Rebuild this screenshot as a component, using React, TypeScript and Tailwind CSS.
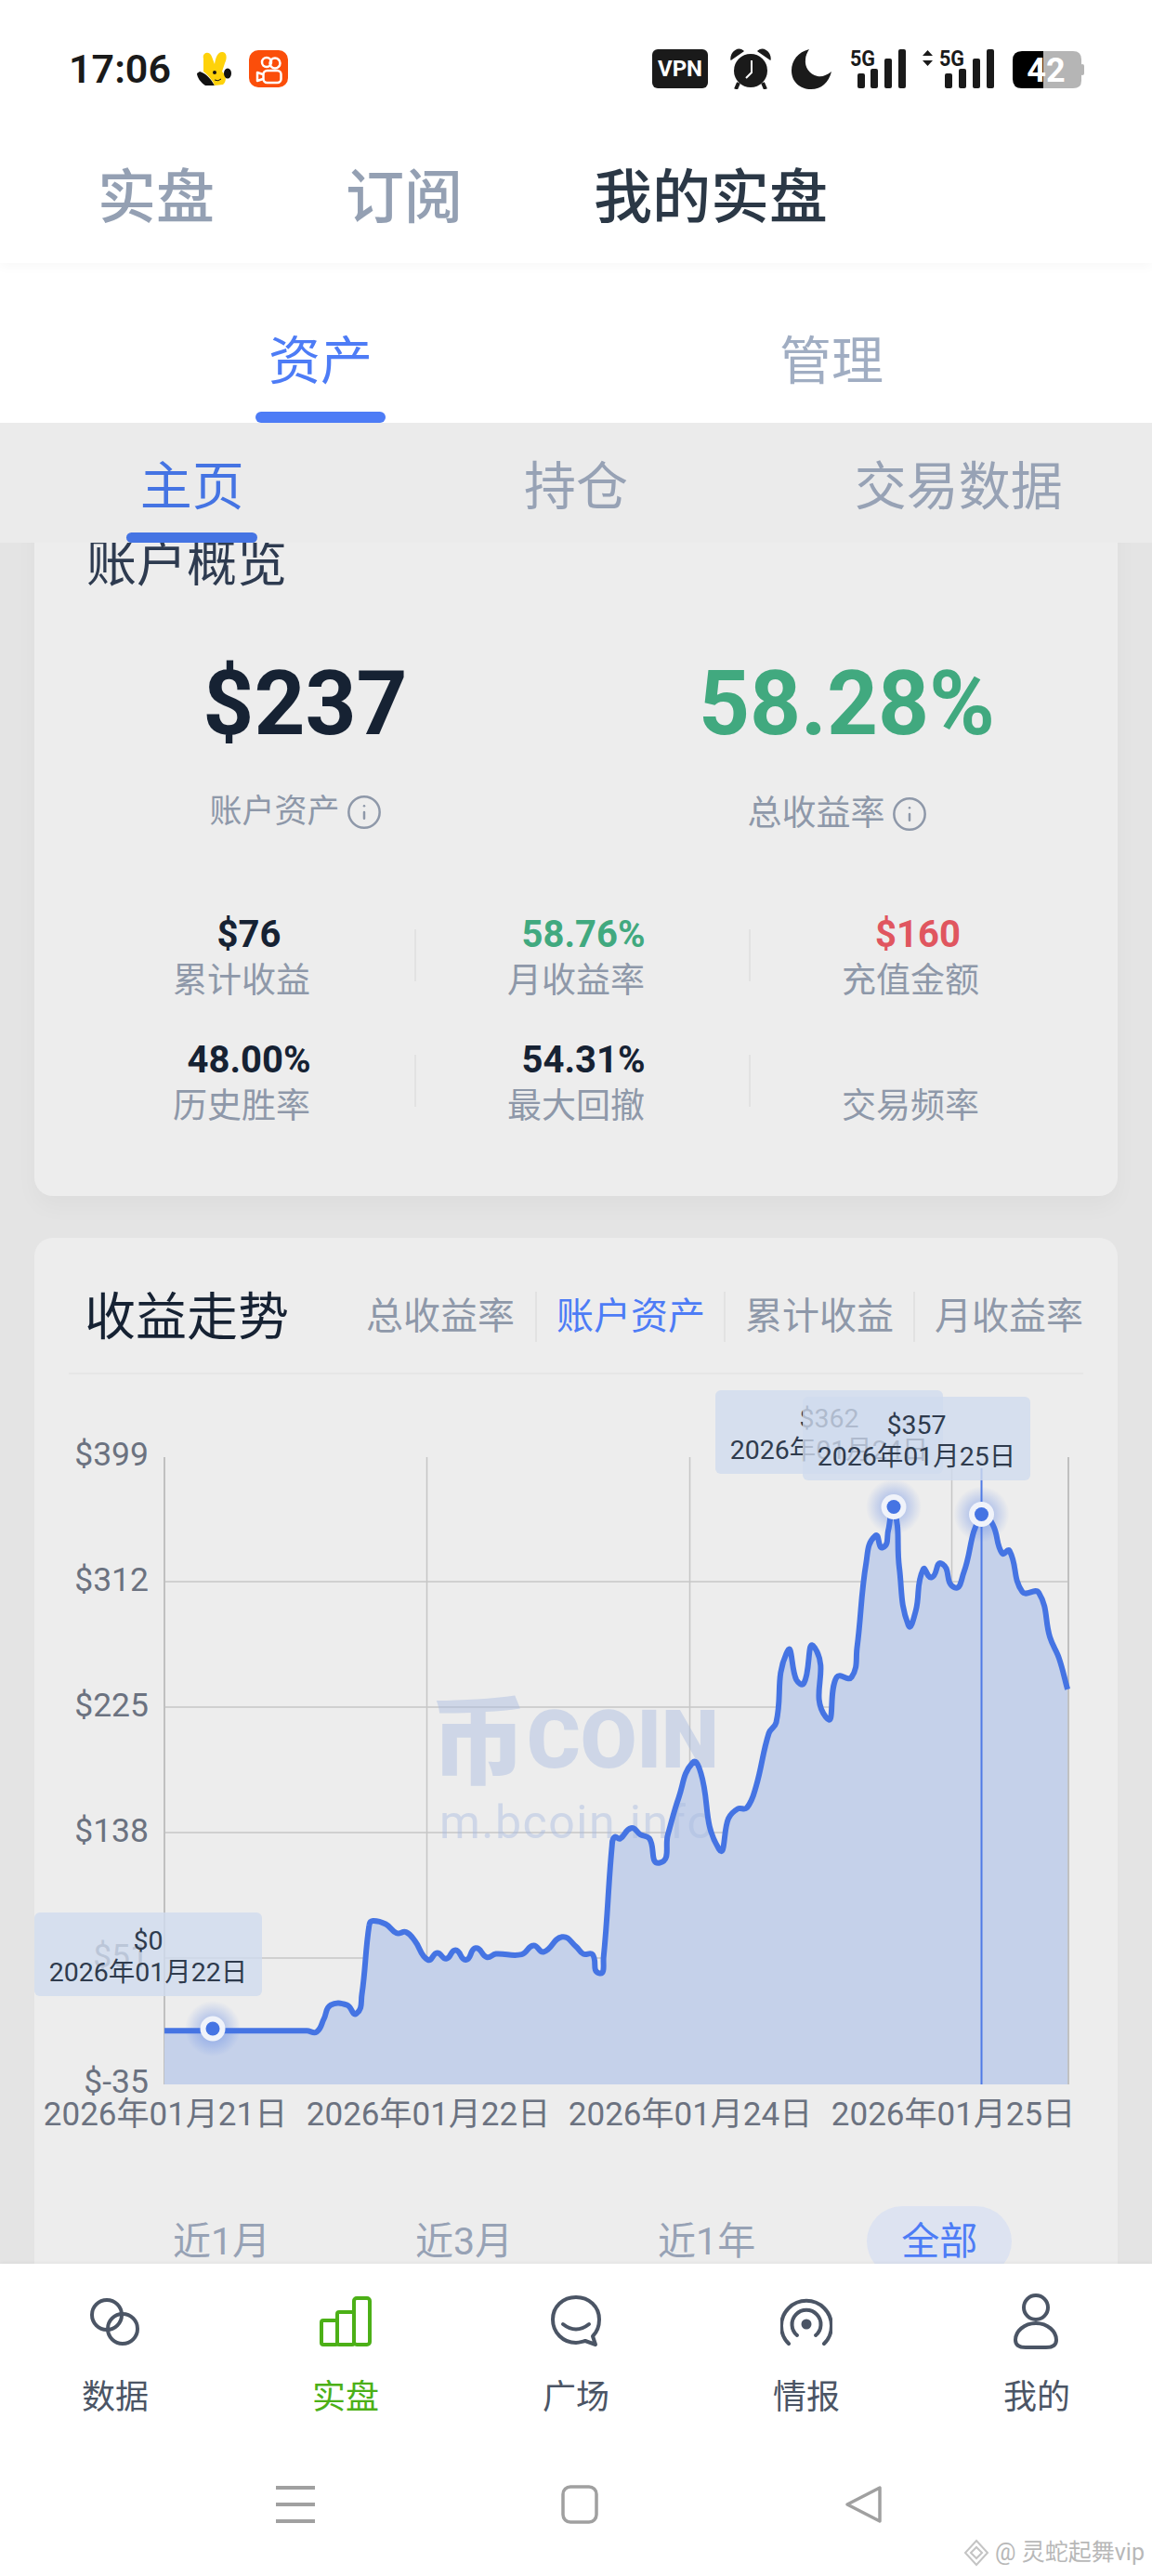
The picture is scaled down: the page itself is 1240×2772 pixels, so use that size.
import React from "react";
import { Info } from "lucide-react";

const left: [number, number][] = [[448,1368],[835,1368],[862,1370],[882,1345],[900,1320],[945,1320],[970,1336],[985,1300],[1005,1170],[1015,1162],[1050,1168],[1080,1185],[1105,1183],[1130,1200],[1165,1235],[1190,1222],[1215,1233],[1240,1217],[1268,1235],[1295,1213],[1325,1230],[1350,1224],[1420,1225],[1452,1208],[1480,1220],[1530,1192]];
const right: [number, number][] = [[0,1210],[20,1224],[45,1225],[63,1260],[75,1230],[98,1020],[105,1005],[120,1008],[150,988],[175,1000],[200,1008],[228,1053],[250,1000],[280,930],[318,865],[340,885],[389,1027],[415,970],[440,952],[465,950],[490,910],[525,810],[545,790],[575,657],[600,710],[620,717],[650,650],[680,780],[710,705],[750,705],[765,650],[790,490],[815,440],[835,462],[850,430],[865,386],[880,500],[905,608],[925,580],[945,503],[968,518],[995,492],[1030,537],[1055,510],[1104,400],[1135,420],[1160,473],[1180,468],[1215,545],[1260,547],[1290,630],[1315,670],[1338,728]];
const pts: [number, number][] = [
  ...left.map(([x, y]) => [x / 2.529, 1400 + y / 1.742] as [number, number]),
  ...right.map(([x, y]) => [620 + x / 2.529, 1400 + y / 1.742] as [number, number]),
];
function smooth(p: [number, number][]) {
  let d = `M${p[0][0].toFixed(1)} ${p[0][1].toFixed(1)}`;
  for (let i = 0; i < p.length - 1; i++) {
    const a = p[Math.max(0, i - 1)], b = p[i], c = p[i + 1], e = p[Math.min(p.length - 1, i + 2)];
    const ab = Math.hypot(c[0] - b[0], c[1] - b[1]);
    const s1 = ab / (Math.hypot(c[0] - a[0], c[1] - a[1]) || 1) * 0.4;
    const s2 = ab / (Math.hypot(e[0] - b[0], e[1] - b[1]) || 1) * 0.4;
    d += ` C${(b[0] + (c[0] - a[0]) * s1).toFixed(1)} ${(b[1] + (c[1] - a[1]) * s1).toFixed(1)} ${(c[0] - (e[0] - b[0]) * s2).toFixed(1)} ${(c[1] - (e[1] - b[1]) * s2).toFixed(1)} ${c[0].toFixed(1)} ${c[1].toFixed(1)}`;
  }
  return d;
}
const linePath = smooth(pts);
const areaPath = `${linePath} L${pts[pts.length - 1][0].toFixed(1)} 2243 L177 2243 Z`;

function StatusBar() {
  return (
    <div className="flex h-[44px] items-center mt-[52px] mb-[50px] pl-[74px] pr-[73px] text-[#1a1a1a]">
      <span className="text-[43px] leading-[44px] font-semibold w-[109px]">17:06</span>
      <svg width="40" height="38" viewBox="0 0 38 38" className="ml-[27px]">
        <path d="M4 22 C11 24 16 30 20 37 L10 37 C5 34 1 28 1 24 Z" fill="#111" />
        <path d="M8 8 C6 1 15 -1 17 6 L20 14 C21 6 24 0 29 1 C34 2 33 9 31 13 L28 22 C33 26 33 33 29 36 L20 37 C18 31 12 25 8 22 Z" fill="#fed20a" />
        <ellipse cx="34" cy="24" rx="4" ry="5.5" fill="#111" />
        <circle cx="20" cy="23" r="2" fill="#111" />
        <path d="M20 31 Q24 33 27 30" stroke="#111" strokeWidth="1" fill="none" />
      </svg>
      <svg width="42" height="40" viewBox="0 0 42 40" className="ml-[18px]">
        <rect width="42" height="40" rx="10" fill="#fb4e0a" />
        <circle cx="19" cy="13" r="5" fill="none" stroke="#fff" strokeWidth="2.5" />
        <circle cx="28" cy="14" r="5.5" fill="none" stroke="#fff" strokeWidth="2.5" />
        <rect x="15.5" y="22" width="19" height="13" rx="4" fill="none" stroke="#fff" strokeWidth="2.5" />
        <path d="M15 26 L9 24 V33 L15 31" fill="none" stroke="#fff" strokeWidth="2.5" strokeLinejoin="round" />
      </svg>
      <div className="ml-auto flex items-center">
        <div className="flex h-[42px] w-[60px] items-center justify-center rounded-md bg-[#1a1a1a] text-[24px] font-bold leading-none text-white">VPN</div>
        <svg width="44" height="44" viewBox="0 0 44 44" className="ml-[24px]">
          <path d="M1 12 C1 3 9 -1 14 3 Z M43 12 C43 3 35 -1 30 3 Z" fill="#1a1a1a" stroke="#1a1a1a" strokeWidth="1.5" strokeLinejoin="round" />
          <circle cx="22" cy="24" r="18" fill="#1a1a1a" />
          <path d="M9 37 L6 44 M35 37 L38 44" stroke="#1a1a1a" strokeWidth="4" />
          <path d="M23 13 V26 L17 32" stroke="#fff" strokeWidth="2" fill="none" />
        </svg>
        <svg width="43" height="43" viewBox="0 0 43 43" className="ml-[22px]">
          <path d="M19 0 C7 3 0 12 0 23 C0 35 9 43 21 43 C32 43 40 36 43 24 C38 28 33 30 28 29 C19 27 14 19 15 11 C15 7 17 3 19 0Z" fill="#1a1a1a" />
        </svg>
        <svg width="60" height="44" viewBox="0 0 60 44" className="ml-[20px]">
          <text x="0" y="19" fontSize="23" fontWeight="700" fill="#1a1a1a" textLength="27" lengthAdjust="spacingAndGlyphs">5G</text>
          <rect x="8" y="27" width="8" height="16" rx="2" fill="#1a1a1a" />
          <rect x="22" y="22" width="8" height="21" rx="2" fill="#1a1a1a" />
          <rect x="37" y="11" width="8" height="32" rx="2" fill="#1a1a1a" />
          <rect x="52" y="1" width="8" height="42" rx="2" fill="#1a1a1a" />
        </svg>
        <svg width="77" height="44" viewBox="0 0 77 44" className="ml-[18px]">
          <path d="M5.5 2 L11 8 H0 Z M5.5 19 L11 13 H0 Z" fill="#1a1a1a" />
          <text x="18" y="19" fontSize="23" fontWeight="700" fill="#1a1a1a" textLength="27" lengthAdjust="spacingAndGlyphs">5G</text>
          <rect x="24" y="27" width="8" height="16" rx="2" fill="#1a1a1a" />
          <rect x="39" y="22" width="8" height="21" rx="2" fill="#1a1a1a" />
          <rect x="54" y="11" width="8" height="32" rx="2" fill="#1a1a1a" />
          <rect x="69" y="1" width="8" height="42" rx="2" fill="#1a1a1a" />
        </svg>
        <svg width="77" height="44" viewBox="0 0 77 44" className="ml-[20px]">
          <path d="M33 3 H65 Q74 3 74 12 V35 Q74 43 65 43 H33 Z" fill="#b5b5b5" />
          <rect x="73" y="17" width="4" height="12" rx="2" fill="#b5b5b5" />
          <path d="M33 3 H10 Q0 3 0 13 V33 Q0 43 10 43 H33 Z" fill="#000" />
          <text x="36" y="36" textAnchor="middle" fontSize="36" fontWeight="700" fill="#fff">42</text>
        </svg>
      </div>
    </div>
  );
}

function Stat({ value, label, color, divider }: { value: string; label: string; color: string; divider?: boolean }) {
  return (
    <div className="relative flex flex-col items-center">
      <span className={`h-[40px] text-[40px] leading-[40px] font-bold ${color}`}>{value}</span>
      <span className="mt-[8px] pr-4 text-[37px] leading-[44px] text-[#8e98a9]">{label}</span>
      {divider && <div className="absolute right-0 top-[14px] h-[56px] w-[2px] bg-[#e2e2e2]" />}
    </div>
  );
}

function NavItem({ label, active, children }: { label: string; active?: boolean; children: React.ReactNode }) {
  return (
    <div className="flex flex-col items-center">
      <svg width="56" height="60" viewBox="0 0 56 60" fill="none" stroke={active ? "#4cb017" : "#4b5565"} strokeWidth="4" strokeLinecap="round" strokeLinejoin="round">
        {children}
      </svg>
      <span className={`mt-[32px] text-[36px] leading-[40px] ${active ? "text-[#4cb017]" : "text-[#4b5565]"}`}>{label}</span>
    </div>
  );
}

function Tip({ value, date, className }: { value: string; date: string; className: string }) {
  return (
    <div className={`absolute flex h-[90px] w-[245px] flex-col items-center justify-center rounded-md bg-[rgba(207,219,238,0.8)] pt-[5px] text-[#2f3b4d] text-[28.5px] leading-[34px] ${className}`}>
      <span>{value}</span>
      <span>{date}</span>
    </div>
  );
}

function Dot({ x, y, id }: { x: number; y: number; id: string }) {
  return (
    <g>
      <circle cx={x} cy={y} r="30" fill={`url(#${id})`} />
      <circle cx={x} cy={y} r="13.5" fill="#f0f3fa" />
      <circle cx={x} cy={y} r="7.5" fill="#4574e3" />
    </g>
  );
}

function Chart() {
  const gridY = [1702, 1837, 1972, 2107];
  const gridX = [459.5, 742.5, 1024.5];
  const yLabels: [string, number][] = [["$399", 1577], ["$312", 1712], ["$225", 1847], ["$138", 1982], ["$51", 2117], ["$-35", 2252]];
  const xLabels: [string, number][] = [["2026年01月21日", 178], ["2026年01月22日", 461], ["2026年01月24日", 743], ["2026年01月25日", 1026]];
  return (
    <div className="relative h-[895px]">
      <svg width="1166" height="895" viewBox="37 1479 1166 895" className="block">
        <defs>
          <radialGradient id="glow">
            <stop offset="40%" stopColor="#4574e3" stopOpacity="0.32" />
            <stop offset="100%" stopColor="#4574e3" stopOpacity="0" />
          </radialGradient>
        </defs>
        {gridY.map((y) => <line key={y} x1="177" x2="1150" y1={y} y2={y} stroke="#c6c6c6" strokeWidth="1.5" />)}
        {gridX.map((x) => <line key={x} x1={x} x2={x} y1="1568" y2="2243" stroke="#c6c6c6" strokeWidth="1.5" />)}
        <line x1="177" x2="177" y1="1568" y2="2243" stroke="#c0c0c0" strokeWidth="2" />
        <line x1="1150" x2="1150" y1="1568" y2="2243" stroke="#c0c0c0" strokeWidth="2" />
        {yLabels.map(([t, y]) => <text key={t} x="160" y={y} textAnchor="end" fontSize="35.5" fill="#6b7280">{t}</text>)}
        {xLabels.map(([t, x]) => <text key={t} x={x} y="2287" textAnchor="middle" fontSize="35" fill="#6b7280">{t}</text>)}
        <path d={areaPath} fill="#c5d1ea" />
        <g fill="#a9bce0" opacity="0.45">
          <text x="463" y="1912" fontSize="104" fontWeight="900" fontFamily="'Noto Sans CJK SC'">币</text>
          <text x="567" y="1902" fontSize="88" fontWeight="900" fontFamily="Roboto">COIN</text>
          <text x="473" y="1978" fontSize="50" letterSpacing="1.5">m.bcoin.info</text>
        </g>
        <line x1="1056.5" x2="1056.5" y1="1580" y2="2243" stroke="#4f7ae6" strokeWidth="2" />
        <path d={linePath} fill="none" stroke="#4574e3" strokeWidth="6" strokeLinejoin="round" />
        <Dot x={229} y={2183} id="glow" />
        <Dot x={962} y={1621.5} id="glow" />
        <Dot x={1056.5} y={1629.5} id="glow" />
      </svg>
      <Tip value="$0" date="2026年01月22日" className="left-0 top-[579px]" />
      <Tip value="$362" date="2026年01月24日" className="left-[733px] top-[17px]" />
      <Tip value="$357" date="2026年01月25日" className="left-[827px] top-[24px]" />
    </div>
  );
}

export default function App() {
  return (
    <div className="flex h-[2772px] w-[1240px] flex-col overflow-hidden bg-white font-['Roboto','Noto_Sans_CJK_SC',sans-serif]">
      <div className="relative z-20 bg-white shadow-[0_4px_12px_rgba(0,0,0,0.03)]">
        <StatusBar />
        <div className="flex h-[137px] items-center gap-[141px] pb-[3px] pl-[105px] text-[63px] font-medium leading-[64px] text-[#94a0b3]">
          <span>实盘</span>
          <span>订阅</span>
          <span className="text-[#2b3846]">我的实盘</span>
        </div>
      </div>
      <div className="relative z-10 grid h-[172px] grid-cols-2 bg-white px-[70px] text-[56px] leading-[56px] text-[#a0adc2]">
        <div className="flex flex-col items-center pt-[78px]">
          <span className="text-[#4d7cf6]">资产</span>
          <div className="mt-[26px] h-[12px] w-[140px] rounded-md bg-[#4d7cf6]" />
        </div>
        <div className="flex flex-col items-center pt-[78px]"><span>管理</span></div>
      </div>
      <div className="relative z-10 grid h-[129px] grid-cols-3 bg-[#ebebeb] text-[56px] leading-[56px] text-[#97a2b5]">
        <div className="flex flex-col items-center pt-[41px]">
          <span className="text-[#4574e3]">主页</span>
          <div className="mt-[21px] h-[11px] w-[141px] rounded-md bg-[#4574e3]" />
        </div>
        <div className="flex flex-col items-center pt-[41px]"><span>持仓</span></div>
        <div className="flex flex-col items-center pt-[41px] pr-[3px]"><span>交易数据</span></div>
      </div>

      <div className="flex-1 overflow-hidden bg-[#e4e4e4] px-[37px]">
        <div className="-mt-[60px] rounded-[20px] bg-[#ededed] pb-[74px] pt-[56px] shadow-[0_12px_24px_rgba(0,0,0,0.03)]">
          <div className="pl-[56px] text-[54px] leading-[56px] text-[#2e3b50]">账户概览</div>
          <div className="mt-[73px] grid grid-cols-2">
            <div className="flex flex-col items-center">
              <span className="text-[96px] font-bold leading-[96px] text-[#162233]">$237</span>
              <div className="mt-[49px] flex h-[40px] items-center gap-[6px] pr-5 text-[35px] text-[#8e98a9]">
                账户资产<Info size={40} strokeWidth={1.5} className="text-[#8e98a9]" />
              </div>
            </div>
            <div className="flex flex-col items-center">
              <span className="text-[96px] font-bold leading-[96px] text-[#41a97f]">58.28%</span>
              <div className="mt-[51px] flex h-[40px] items-center gap-[6px] pr-5 text-[37px] text-[#8e98a9]">
                总收益率<Info size={40} strokeWidth={1.5} className="text-[#8e98a9]" />
              </div>
            </div>
          </div>
          <div className="mt-[90px] grid grid-cols-3 gap-y-[43px] pl-[51px] pr-[35px]">
            <Stat value="$76" label="累计收益" color="text-[#162233]" divider />
            <Stat value="58.76%" label="月收益率" color="text-[#41a97f]" divider />
            <Stat value="$160" label="充值金额" color="text-[#e0565f]" />
            <Stat value="48.00%" label="历史胜率" color="text-[#162233]" divider />
            <Stat value="54.31%" label="最大回撤" color="text-[#162233]" divider />
            <Stat value="" label="交易频率" color="text-[#162233]" />
          </div>
        </div>

        <div className="mt-[45px] rounded-[20px] bg-[#ededed]">
          <div className="mx-[37px] flex h-[147px] items-center border-b-2 border-[#e6e6e6] pb-[25px] pt-[50px]">
            <span className="pl-[17px] text-[55px] leading-[64px] text-[#162233]">收益走势</span>
            <div className="ml-auto flex items-center text-[40px] leading-[54px] text-[#8e98a9]">
              <span className="pr-[22px]">总收益率</span>
              <span className="border-l-2 border-[#e2e2e2] pl-[21px] pr-[20px] text-[#4d7cf6]">账户资产</span>
              <span className="border-l-2 border-[#e2e2e2] pl-[21px] pr-[21px]">累计收益</span>
              <span className="border-l-2 border-[#e2e2e2] pl-[21px]">月收益率</span>
            </div>
          </div>
          <Chart />
          <div className="ml-[113px] flex h-[100px] items-start gap-[84px] text-[41px] leading-[76px] text-[#97a2b5]">
            <span className="px-[36px]">近1月</span>
            <span className="px-[36px]">近3月</span>
            <span className="px-[36px]">近1年</span>
            <span className="h-[76px] rounded-full bg-[#dde3f1] px-[37px] text-[#4d7cf6]">全部</span>
          </div>
        </div>
      </div>

      <div className="relative z-20 h-[336px] bg-white pt-[32px] shadow-[0_-2px_3px_rgba(0,0,0,0.03)]">
        <div className="grid grid-cols-5">
          <NavItem label="数据">
            <circle cx="19" cy="23" r="16" />
            <circle cx="36" cy="38" r="16" />
          </NavItem>
          <NavItem label="实盘" active>
            <rect x="2" y="29" width="17" height="26" rx="2" />
            <rect x="19" y="20" width="18" height="35" rx="2" />
            <rect x="37" y="5" width="17" height="50" rx="3" />
          </NavItem>
          <NavItem label="广场">
            <path d="M38 51 C34 52 31 53 28 53 C14 53 3 42 3 28 C3 14 14 4 28 4 C42 4 53 14 53 28 C53 36 50 42 46 46 L49 55 Z" />
            <path d="M14 33 Q28 44 42 33" />
          </NavItem>
          <NavItem label="情报">
            <path d="M9 54 A27 27 0 1 1 47 54" />
            <path d="M18 45 A15.5 15.5 0 1 1 38 45" />
            <circle cx="28" cy="33" r="3.5" fill="#4b5565" />
          </NavItem>
          <NavItem label="我的">
            <circle cx="27" cy="15" r="13" />
            <path d="M27 32 C14 32 5 41 5 50 C5 56 10 58 16 58 H38 C44 58 49 56 49 50 C49 41 40 32 27 32Z" />
          </NavItem>
        </div>
        <div className="mt-[73px] flex items-center gap-[265px] pl-[297px]">
          <svg width="42" height="44" viewBox="0 0 42 44">
            <rect y="2" width="42" height="4" fill="#a0a0a0" />
            <rect y="20" width="42" height="4" fill="#a0a0a0" />
            <rect y="38" width="42" height="4" fill="#a0a0a0" />
          </svg>
          <svg width="40" height="44" viewBox="0 0 40 44">
            <rect x="2" y="3" width="36" height="38" rx="8" fill="none" stroke="#a0a0a0" strokeWidth="3.5" />
          </svg>
          <svg width="40" height="44" viewBox="0 0 40 44">
            <path d="M38 4 V40 L3 22 Z" fill="none" stroke="#a0a0a0" strokeWidth="3.5" strokeLinejoin="round" />
          </svg>
        </div>
        <div className="absolute bottom-[10px] right-[8px] flex items-center gap-[6px] text-[25px] leading-[30px] text-[#b8b8b8]">
          <svg width="28" height="30" viewBox="0 0 28 30" fill="none" stroke="#c4c4c4" strokeWidth="2">
            <path d="M14 2 L26 15 L14 28 L2 15 Z" />
            <path d="M14 9 L20 15 L14 21 L8 15 Z" />
          </svg>
          <span>@ 灵蛇起舞vip</span>
        </div>
      </div>
    </div>
  );
}
